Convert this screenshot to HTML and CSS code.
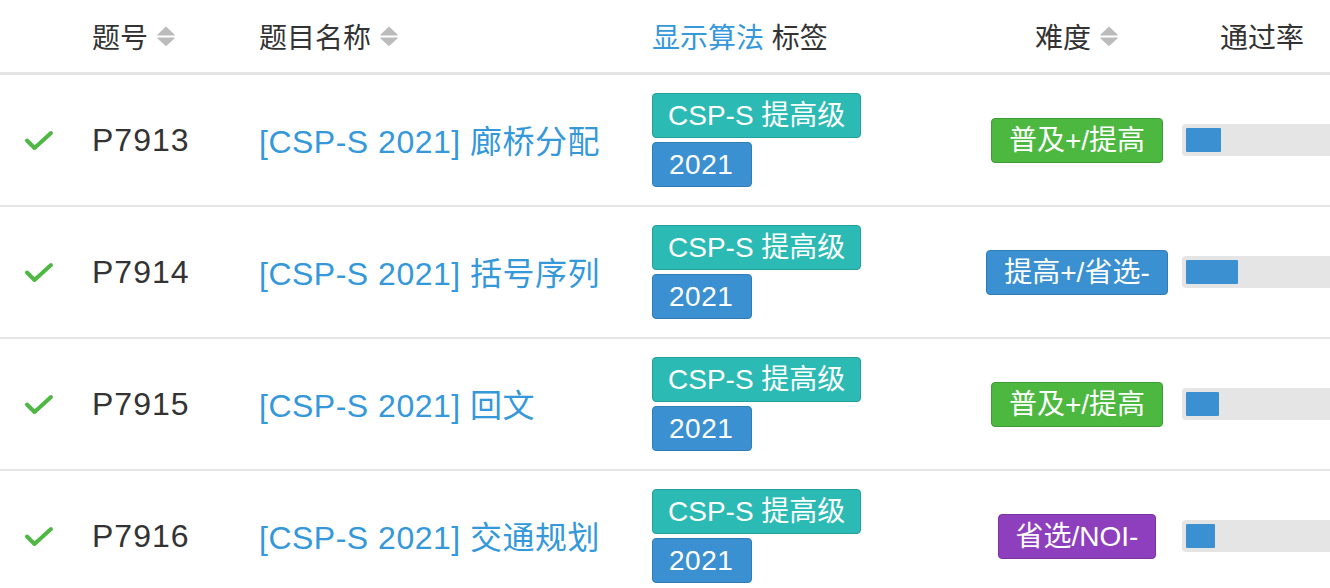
FILE: index.html
```html
<!DOCTYPE html>
<html lang="zh-CN">
<head>
<meta charset="utf-8">
<title>题目列表</title>
<link rel="stylesheet" href="styles.css">
</head>
<body>
<div class="list">
  <div class="row head">
    <div class="cell"></div>
    <div class="cell sortable">题号<svg class="sort" viewBox="0 0 20 22" width="20" height="22"><path d="M10 1.5 L18.5 9.5 Q19 10.5 18 10.5 L2 10.5 Q1 10.5 1.5 9.5 Z"/><path d="M2 12.5 L18 12.5 Q19 12.5 18.5 13.5 L10 21.2 L1.5 13.5 Q1 12.5 2 12.5 Z"/></svg></div>
    <div class="cell sortable">题目名称<svg class="sort" viewBox="0 0 20 22" width="20" height="22"><path d="M10 1.5 L18.5 9.5 Q19 10.5 18 10.5 L2 10.5 Q1 10.5 1.5 9.5 Z"/><path d="M2 12.5 L18 12.5 Q19 12.5 18.5 13.5 L10 21.2 L1.5 13.5 Q1 12.5 2 12.5 Z"/></svg></div>
    <div class="cell"><span class="link">显示算法</span>&nbsp;标签</div>
    <div class="cell center sortable">难度<svg class="sort" viewBox="0 0 20 22" width="20" height="22"><path d="M10 1.5 L18.5 9.5 Q19 10.5 18 10.5 L2 10.5 Q1 10.5 1.5 9.5 Z"/><path d="M2 12.5 L18 12.5 Q19 12.5 18.5 13.5 L10 21.2 L1.5 13.5 Q1 12.5 2 12.5 Z"/></svg></div>
    <div class="cell center">通过率</div>
  </div>

  <div class="row item">
    <div class="cell status"><svg viewBox="0 0 30 21" width="30" height="21"><polyline points="3,10.5 10.5,18 27,3"/></svg></div>
    <div class="cell pid">P7913</div>
    <div class="cell title"><span class="link">[CSP-S 2021] 廊桥分配</span></div>
    <div class="cell tags"><span class="tag teal">CSP-S 提高级</span><span class="tag blue num">2021</span></div>
    <div class="cell center"><span class="diff green">普及+/提高</span></div>
    <div class="cell"><div class="bar"><div class="fill" style="width:35px"></div></div></div>
  </div>

  <div class="row item">
    <div class="cell status"><svg viewBox="0 0 30 21" width="30" height="21"><polyline points="3,10.5 10.5,18 27,3"/></svg></div>
    <div class="cell pid">P7914</div>
    <div class="cell title"><span class="link">[CSP-S 2021] 括号序列</span></div>
    <div class="cell tags"><span class="tag teal">CSP-S 提高级</span><span class="tag blue num">2021</span></div>
    <div class="cell center"><span class="diff bluediff">提高+/省选-</span></div>
    <div class="cell"><div class="bar"><div class="fill" style="width:52px"></div></div></div>
  </div>

  <div class="row item">
    <div class="cell status"><svg viewBox="0 0 30 21" width="30" height="21"><polyline points="3,10.5 10.5,18 27,3"/></svg></div>
    <div class="cell pid">P7915</div>
    <div class="cell title"><span class="link">[CSP-S 2021] 回文</span></div>
    <div class="cell tags"><span class="tag teal">CSP-S 提高级</span><span class="tag blue num">2021</span></div>
    <div class="cell center"><span class="diff green">普及+/提高</span></div>
    <div class="cell"><div class="bar"><div class="fill" style="width:33px"></div></div></div>
  </div>

  <div class="row item">
    <div class="cell status"><svg viewBox="0 0 30 21" width="30" height="21"><polyline points="3,10.5 10.5,18 27,3"/></svg></div>
    <div class="cell pid">P7916</div>
    <div class="cell title"><span class="link">[CSP-S 2021] 交通规划</span></div>
    <div class="cell tags"><span class="tag teal">CSP-S 提高级</span><span class="tag blue num">2021</span></div>
    <div class="cell center"><span class="diff purple">省选/NOI-</span></div>
    <div class="cell"><div class="bar"><div class="fill" style="width:29px"></div></div></div>
  </div>
</div>
</body>
</html>
```

FILE: styles.css
```css
html, body {
  margin: 0;
  padding: 0;
  overflow: hidden;
  background: #fff;
}
body {
  font-family: "Liberation Sans", "Noto Sans CJK SC", sans-serif;
  color: #333;
}
.list {
  width: 1342px;
}
.row {
  display: grid;
  grid-template-columns: 92px 167px 393px 320px 210px 160px;
  align-items: center;
}
.head {
  height: 72px;
  border-bottom: 3px solid #e5e5e5;
  font-size: 28px;
}
.item {
  height: 130px;
  border-bottom: 2px solid #e5e5e5;
}
.cell {
  display: flex;
  align-items: center;
  white-space: nowrap;
}
.center {
  justify-content: center;
}
.sortable .sort {
  margin-left: 8px;
  fill: #bcbcbc;
}
.link {
  color: #3498db;
}
.status {
  padding-left: 24px;
}
.status svg {
  fill: none;
  stroke: #4fb845;
  stroke-width: 4;
  stroke-linecap: round;
  stroke-linejoin: round;
}
.pid {
  font-size: 32px;
  letter-spacing: 1px;
}
.title {
  font-size: 32px;
  letter-spacing: 0.5px;
  padding-bottom: 2px;
}
.tags {
  flex-direction: column;
  align-items: flex-start;
  gap: 4px;
}
.tag, .diff {
  display: inline-block;
  box-sizing: border-box;
  height: 45px;
  line-height: 43px;
  font-size: 28px;
  color: #fff;
  border-radius: 4px;
  border: 1px solid transparent;
}
.tag {
  padding: 0 15px;
}
.tag.num {
  padding: 0 18px 0 16px;
  letter-spacing: 0.5px;
}
.diff {
  padding: 0 17px;
}
.teal {
  background: #2bbbb4;
  border-color: #24a09a;
}
.blue {
  background: #3a90d0;
  border-color: #2f7cb6;
}
.green {
  background: #4db840;
  border-color: #3f9c34;
}
.bluediff {
  background: #3a90d0;
  border-color: #2f7cb6;
}
.purple {
  background: #8e3fbd;
  border-color: #7a34a3;
}
.bar {
  box-sizing: border-box;
  width: 160px;
  height: 32px;
  padding: 4px;
  background: #e5e5e5;
  border-radius: 4px;
}
.fill {
  height: 24px;
  background: #3a90d0;
  border-radius: 1px;
}
```
